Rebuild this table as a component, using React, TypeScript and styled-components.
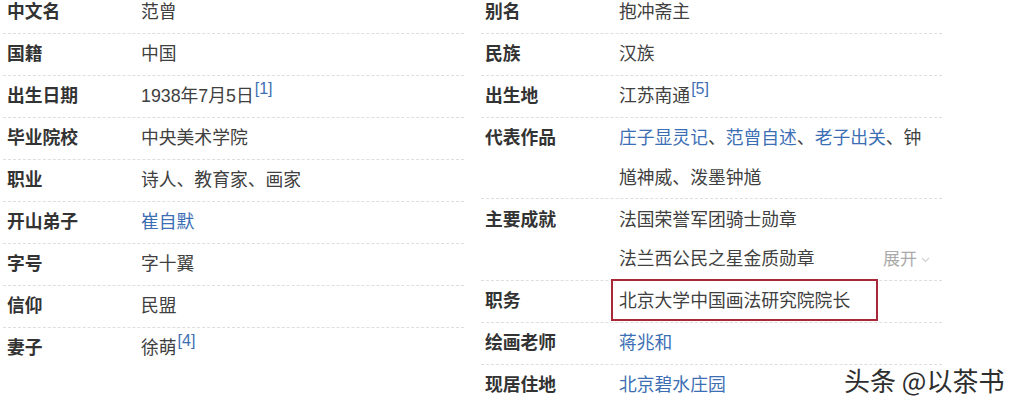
import React from 'react';
import styled, { createGlobalStyle } from 'styled-components';

const GlobalStyle = createGlobalStyle`
  html, body {
    margin: 0;
    padding: 0;
    background: #fff;
  }
  body {
    font-family: "Liberation Sans", "Noto Sans CJK SC", sans-serif;
    color: #333;
    overflow: hidden;
  }
`;

type Piece = { text: string; link?: boolean; sup?: string };
type Item = { label: string; lines: Piece[][]; boxed?: boolean; more?: boolean };

const leftItems: Item[] = [
  { label: '中文名', lines: [[{ text: '范曾' }]] },
  { label: '国籍', lines: [[{ text: '中国' }]] },
  { label: '出生日期', lines: [[{ text: '1938年7月5日', sup: '[1]' }]] },
  { label: '毕业院校', lines: [[{ text: '中央美术学院' }]] },
  { label: '职业', lines: [[{ text: '诗人、教育家、画家' }]] },
  { label: '开山弟子', lines: [[{ text: '崔自默', link: true }]] },
  { label: '字号', lines: [[{ text: '字十翼' }]] },
  { label: '信仰', lines: [[{ text: '民盟' }]] },
  { label: '妻子', lines: [[{ text: '徐萌', sup: '[4]' }]] },
];

const rightItems: Item[] = [
  { label: '别名', lines: [[{ text: '抱冲斋主' }]] },
  { label: '民族', lines: [[{ text: '汉族' }]] },
  { label: '出生地', lines: [[{ text: '江苏南通', sup: '[5]' }]] },
  {
    label: '代表作品',
    lines: [[
      { text: '庄子显灵记', link: true },
      { text: '、' },
      { text: '范曾自述', link: true },
      { text: '、' },
      { text: '老子出关', link: true },
      { text: '、钟馗神威、泼墨钟馗' },
    ]],
  },
  {
    label: '主要成就',
    lines: [[{ text: '法国荣誉军团骑士勋章' }], [{ text: '法兰西公民之星金质勋章' }]],
    more: true,
  },
  { label: '职务', lines: [[{ text: '北京大学中国画法研究院院长' }]], boxed: true },
  { label: '绘画老师', lines: [[{ text: '蒋兆和', link: true }]] },
  { label: '现居住地', lines: [[{ text: '北京碧水庄园', link: true }]] },
];

const Chevron = () => (
  <svg width="9" height="6" viewBox="0 0 9 6">
    <path d="M1 1 L4.5 4.5 L8 1" fill="none" stroke="#cfcfcf" strokeWidth="1.1" />
  </svg>
);

const renderLine = (pieces: Piece[]) =>
  pieces.map((p, i) => (
    <React.Fragment key={i}>
      {p.link ? <Link>{p.text}</Link> : p.text}
      {p.sup && <Sup>{p.sup}</Sup>}
    </React.Fragment>
  ));

const Column = ({ items }: { items: Item[] }) => (
  <Col>
    {items.map((item, i) => (
      <Row key={item.label} last={i === items.length - 1}>
        <Label>{item.label}</Label>
        <Value>
          {item.lines.map((line, j) => (
            <Line key={j}>
              {renderLine(line)}
              {item.more && j === item.lines.length - 1 && (
                <More>
                  展开
                  <Chevron />
                </More>
              )}
            </Line>
          ))}
          {item.boxed && <Highlight />}
        </Value>
      </Row>
    ))}
  </Col>
);

export default function App() {
  return (
    <>
      <GlobalStyle />
      <Page>
        <Column items={leftItems} />
        <Column items={rightItems} />
        <Watermark>头条 @以茶书</Watermark>
      </Page>
    </>
  );
}

const Page = styled.div`
  position: relative;
  width: 1019px;
  height: 400px;
  display: flex;
  gap: 17px;
  padding-left: 3px;
  box-sizing: border-box;
  overflow: hidden;
`;

const Col = styled.div`
  width: 461px;
  display: flex;
  flex-direction: column;
  margin-top: -8.5px;
`;

const Row = styled.div<{ last: boolean }>`
  display: flex;
  padding-top: 1.5px;
  border-bottom: 1px dashed ${({ last }) => (last ? 'transparent' : '#dedede')};
`;

const Label = styled.div`
  width: 138px;
  flex-shrink: 0;
  padding-left: 4px;
  box-sizing: border-box;
  font-size: 17.8px;
  line-height: 39px;
  font-weight: 700;
  color: #333;
`;

const Value = styled.div`
  position: relative;
  flex: 1;
  font-size: 17.8px;
  line-height: 39.5px;
  color: #404040;
`;

const Line = styled.div`
  position: relative;
  padding-right: 14px;
`;

const Link = styled.span`
  color: #3c6eb4;
`;

const Sup = styled.sup`
  font-size: 16px;
  line-height: 0;
  color: #3c6eb4;
  position: relative;
  top: -1px;
  margin-left: 1px;
`;

const More = styled.span`
  position: absolute;
  right: 12px;
  top: 0;
  display: inline-flex;
  align-items: center;
  gap: 4px;
  font-size: 17px;
  color: #aaa;
`;

const Highlight = styled.div`
  position: absolute;
  left: -8px;
  top: -3px;
  width: 267px;
  height: 42px;
  border: 2px solid #a8283a;
  box-sizing: border-box;
  pointer-events: none;
`;

const Watermark = styled.div`
  position: absolute;
  left: 844px;
  top: 362px;
  font-family: "Noto Sans CJK SC", sans-serif;
  font-size: 26px;
  line-height: 36px;
  color: #2e2e2e;
  text-shadow: 0 0 2px #fff, 1px 1px 0 #fff, -1px -1px 0 #fff;
  white-space: nowrap;
`;
